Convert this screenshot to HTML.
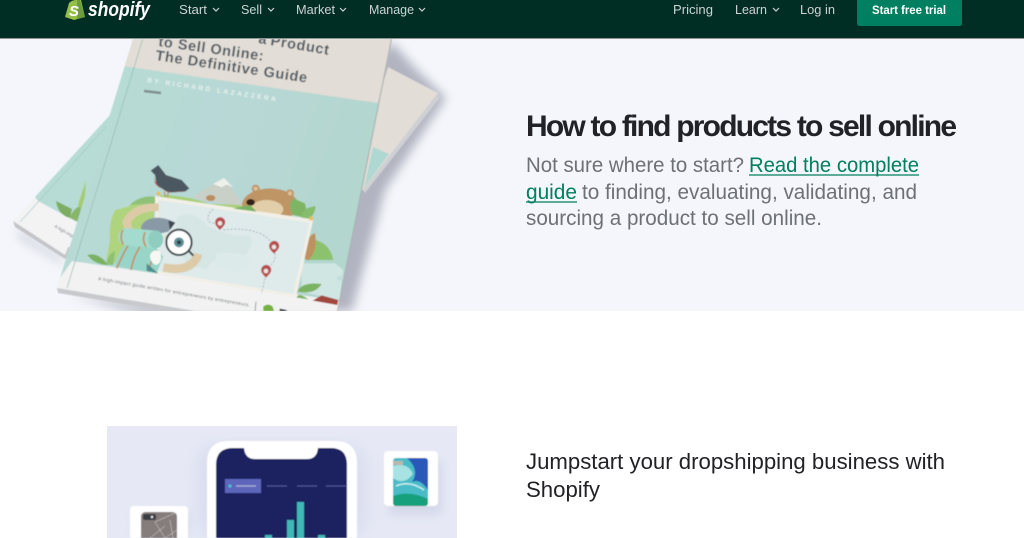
<!DOCTYPE html>
<html>
<head>
<meta charset="utf-8">
<title>Shopify</title>
<style>
html,body{margin:0;padding:0;background:#fff;width:1024px;height:538px;overflow:hidden}
svg{display:block}
text{font-family:"Liberation Sans",sans-serif}
</style>
</head>
<body>
<svg width="1024" height="538" viewBox="0 0 1024 538" xmlns="http://www.w3.org/2000/svg">
<defs>
<filter id="b8" x="-30%" y="-30%" width="160%" height="160%"><feGaussianBlur stdDeviation="8"/></filter>
<filter id="b5" x="-30%" y="-30%" width="160%" height="160%"><feGaussianBlur stdDeviation="5"/></filter>
<filter id="s" x="-5%" y="-5%" width="110%" height="110%"><feGaussianBlur stdDeviation="0.5"/></filter>
<filter id="t" x="-5%" y="-20%" width="110%" height="140%"><feGaussianBlur stdDeviation="0.3"/></filter>
<clipPath id="hero"><rect x="0" y="39" width="1024" height="272"/></clipPath>
<clipPath id="cover"><path d="M133 39H392L338 311H195L57 288Z"/></clipPath>
<clipPath id="low"><rect x="0" y="426" width="1024" height="112"/></clipPath>
<clipPath id="case"><rect x="393" y="458" width="35" height="48" rx="3"/></clipPath>
<linearGradient id="teal" x1="0" y1="0" x2="1" y2="0.3"><stop offset="0" stop-color="#b6dcd5"/><stop offset=".6" stop-color="#b8d8d6"/><stop offset="1" stop-color="#b3d6ce"/></linearGradient>
</defs>

<!-- hero -->
<rect x="0" y="39" width="1024" height="272" fill="#f4f6fb"/>
<g clip-path="url(#hero)">
  <!-- shadows -->
  <path d="M392 42L415 68L446 98L385 190L352 311H325L375 60Z" fill="#85879a" opacity=".6" filter="url(#b5)"/>
  <path d="M70 295L190 311L340 311L200 330Z" fill="#85879a" opacity=".55" filter="url(#b5)"/>
  <path d="M16 228L64 258L62 264L20 240Z" fill="#9a9db0" opacity=".35" filter="url(#b5)"/>

  <g filter="url(#s)">
    <!-- back left book -->
    <path d="M13 221L15 227L65 259L75 250Z" fill="#c3c5c8"/>
    <path d="M110 115L13 221L65 255L110 140Z" fill="#f3f3f4"/>
    <path d="M110 115L35 197L38 201L77 222L110 140Z" fill="#b6dcd5"/>
    <path d="M114 118L20 222" stroke="#a4c9c3" stroke-width=".6" fill="none"/>
    <path d="M56 201L72 209L70 218Q58 215 56 201Z" fill="#7dad62"/>
    <path d="M70 218Q72 209 82 205L78 222Z" fill="#88b76c"/>
    <path d="M78 205L86 180L84 212Z" fill="#a6cc72"/>
    <g transform="translate(54 227) rotate(30)"><text x="0" y="0" font-size="4.5" fill="#77797d">A high-imp</text></g>

    <!-- back right book -->
    <path d="M438 93L439 99L365 193L363 190Z" fill="#cfd0d4"/>
    <path d="M388 67L438 93L363 190L350 190Z" fill="#e2ddd6"/>
    <path d="M373 147L389 154L364 188Z" fill="#b0d8d2"/>

    <!-- front book -->
    <path d="M57 288L58 293L195 316L205 300Z" fill="#c7c9cc"/>
    <path d="M133 39H392L338 311H195L57 288Z" fill="url(#teal)"/>
    <g clip-path="url(#cover)">
      <path d="M120 30H400L378 103L123 66Z" fill="#e2ddd6"/>
      <path d="M72 261L341 301L338 320H180L50 292Z" fill="#f2f2f2"/>
      <path d="M392 39L338 311" stroke="#a9adad" stroke-width="2" fill="none"/>
      <path d="M143 38L67 288" stroke="#93bcb5" stroke-width=".7" fill="none"/>

      <!-- cover text -->
      <text transform="translate(158 46) rotate(8)" font-size="14.5" font-weight="700" fill="#515c63" textLength="106" lengthAdjust="spacing">to Sell Online:</text>
      <text transform="translate(258 43) rotate(9)" font-size="14.5" font-weight="700" fill="#515c63" textLength="8">a</text>
      <text transform="translate(270 45) rotate(9.5)" font-size="14.5" font-weight="700" fill="#515c63" textLength="59" lengthAdjust="spacing">Product</text>
      <text transform="translate(155 60) rotate(8.5)" font-size="14.5" font-weight="700" fill="#515c63" textLength="153" lengthAdjust="spacing">The Definitive Guide</text>
      <text transform="translate(147 82) rotate(8.5)" font-size="6.5" font-weight="700" fill="#e8f1ee" textLength="130" lengthAdjust="spacing">BY RICHARD LAZAZZERA</text>
      <path d="M144 91L161 93" stroke="#808d90" stroke-width="2.5"/>
      <text transform="translate(98 280) rotate(10)" font-size="4.8" fill="#666b70" textLength="154" lengthAdjust="spacing">A high-impact guide written for entrepreneurs by entrepreneurs.</text>
    </g>

    <!-- illustration: coordinates are zoom space -->
    <g transform="translate(0 150) scale(.3333)">
      <!-- mountain -->
      <path d="M578 140L672 84L735 170L600 150Z" fill="#c9d0c8"/>
      <path d="M640 102L672 84L700 112L680 104L665 112Z" fill="#eef0ea"/>
      <ellipse cx="632" cy="144" rx="14" ry="9" fill="#b98d5e"/>
      <!-- far bushes -->
      <path d="M1000 330Q990 280 945 270L915 330Z" fill="#8cc26e"/>
      <path d="M905 340H1005L1030 360L1018 450L905 425Z" fill="#d0e6e3"/>
      <!-- bear -->
      <path d="M905 320Q925 250 945 250Q955 300 925 332Z" fill="#be9160"/>
      <ellipse cx="810" cy="165" rx="84" ry="50" fill="#bf9566"/>
      <circle cx="767" cy="116" r="12" fill="#bf9566"/><circle cx="767" cy="116" r="6" fill="#dcc29c"/>
      <circle cx="870" cy="130" r="12" fill="#bf9566"/><circle cx="870" cy="130" r="6" fill="#dcc29c"/>
      <ellipse cx="800" cy="178" rx="50" ry="28" fill="#e2cfa9"/>
      <ellipse cx="752" cy="157" rx="13" ry="10" fill="#352016"/>
      <path d="M880 145Q860 165 880 195L925 205L915 160Z" fill="#7eb565"/>
      <path d="M905 205Q900 175 947 168Q945 195 925 208Z" fill="#86bc6d"/>
      <!-- left bush -->
      <path d="M465 140L400 155L385 170L345 180Q325 220 330 270L318 335L450 350Z" fill="#b0d37e"/>
      <path d="M390 165Q420 135 465 140L465 160Z" fill="#8fc278"/>
      <path d="M480 135Q560 135 640 165L760 185L720 165L480 155Z" fill="#a9cf76"/>
      <!-- map -->
      <path d="M465 138L940 208L888 442L468 372Z" fill="#f2efe7"/>
      <path d="M476 150L928 218L880 432L476 364Z" fill="#dfeaeb"/>
      <path d="M530 205Q570 170 625 230Q700 265 750 255Q770 300 710 330Q640 310 620 360L560 340L520 280Z" fill="#d5e6e5"/>
      <path d="M650 310Q720 300 760 330L740 360Q670 370 645 340Z" fill="#dcebea"/>
      <path d="M700 176L770 185L750 165Z" fill="#78b160"/>
      <path d="M640 178Q620 190 625 215L648 222M670 240Q730 232 780 250Q805 262 815 280M825 310Q830 330 808 350M795 385L785 430" fill="none" stroke="#8a9a9c" stroke-width="2" stroke-dasharray="6 5"/>
      <!-- pins -->
      <path d="M660 240Q645 225 646 220A15 15 0 1 1 675 221Q674 226 660 240Z" fill="#b84e50"/><circle cx="660" cy="220" r="7" fill="#e8e6e0"/>
      <path d="M822 311Q807 296 808 291A15 15 0 1 1 837 292Q836 297 822 311Z" fill="#b84e50"/><circle cx="822" cy="291" r="7" fill="#e8e6e0"/>
      <path d="M798 383Q783 368 784 363A15 15 0 1 1 813 364Q812 369 798 383Z" fill="#b84e50"/><circle cx="798" cy="363" r="7" fill="#e8e6e0"/>
      <path d="M470 125h11v11h-11zM928 200h11v11h-11z" fill="#e9bd5f"/>
      <!-- bird -->
      <path d="M452 62L475 45L498 75L545 90L568 115L555 125L505 128L470 105L465 75Z" fill="#4b5962"/>
      <path d="M462 80Q470 115 505 127L565 122L545 125Q490 132 465 100Z" fill="#b55a4b"/>
      <path d="M492 125L497 140M505 125L503 140" stroke="#b87d58" stroke-width="3"/>
      <!-- arms and pack -->
      <path d="M476 172Q405 170 380 215L385 240" fill="none" stroke="#ddcba8" stroke-width="24"/>
      <path d="M595 312Q575 370 490 352" fill="none" stroke="#ddcba8" stroke-width="26"/>
      <path d="M423 232Q430 205 475 203Q505 205 526 218L505 245Q460 258 425 240Z" fill="#8a99a6"/>
      <path d="M505 212L526 218L510 240Z" fill="#3f4a50"/>
      <path d="M345 348Q350 310 375 285L470 295L490 320L470 370Z" fill="#98d5c9"/>
      <path d="M350 355Q370 310 385 285M393 360Q400 320 420 290M460 315L445 365" fill="none" stroke="#c78b62" stroke-width="5"/>
      <path d="M440 340L475 370L440 362Z" fill="#4f8c8c"/>
      <rect x="355" y="238" width="135" height="52" rx="25" fill="#a3dcce" transform="rotate(5 420 264)"/>
      <path d="M368 240Q358 265 370 284M435 247Q425 270 438 290" fill="none" stroke="#c78b62" stroke-width="5"/>
      <ellipse cx="467" cy="268" rx="22" ry="27" fill="#8ecdc0"/>
      <path d="M495 260Q520 235 528 255L500 290Z" fill="#ddcba8"/>
      <path d="M450 315Q460 295 480 305Q490 335 470 345Q450 340 450 315Z" fill="#f7f7f3"/>
      <!-- magnifier -->
      <path d="M562 298L580 317" stroke="#3c4448" stroke-width="6"/>
      <circle cx="537" cy="277" r="38" fill="#fff" stroke="#3c4448" stroke-width="6"/>
      <circle cx="537" cy="277" r="15" fill="#5e8e97"/><circle cx="537" cy="277" r="6" fill="#2d3c45"/>
      <!-- leaves -->
      <path d="M262 315Q295 305 325 345Q285 345 262 315Z" fill="#7ab262"/>
      <path d="M320 345Q320 315 345 303L340 345Z" fill="#8ec072"/>
      <path d="M892 425Q905 395 965 402Q945 435 892 425Z" fill="#7cb362"/>
      <path d="M890 443Q895 425 925 448Z" fill="#7cb362"/>
      <path d="M938 452L965 436L1015 450L1012 465Z" fill="#a2473e"/>
      <path d="M1010 385a10 7 0 1 1 20 0a10 7 0 1 1 -20 0" fill="#bfdedb"/>
      <!-- footer logo -->
      <path d="M768 455L765 488" stroke="#5f6468" stroke-width="2"/>
      <path d="M790 470Q805 458 818 470L822 483H790Z" fill="#75b13f"/>
      <path d="M838 483L840 476L860 480L861 483Z" fill="#33383c"/>
    </g>
  </g>
</g>

<!-- nav -->
<rect x="0" y="0" width="1024" height="38" fill="#002e25"/>
<rect x="0" y="38" width="1024" height="1" fill="#8f9694"/>
<path d="M65 17L69 3Q72 0 76 0H81L85 17L74 20Z" fill="#95bf47"/>
<path d="M80 0L85 17L77 19V0Z" fill="#6c9c3d"/>
<text x="69" y="16" font-size="15" font-weight="700" fill="#fff" font-style="italic">S</text>
<text x="88" y="16" font-size="20" font-weight="700" font-style="italic" fill="#fff" textLength="62" lengthAdjust="spacingAndGlyphs">shopify</text>
<g font-size="13" fill="#cdd3d1" font-weight="400">
  <text x="179" y="14" textLength="28" lengthAdjust="spacingAndGlyphs">Start</text>
  <text x="241" y="14" textLength="21" lengthAdjust="spacingAndGlyphs">Sell</text>
  <text x="296" y="14" textLength="39" lengthAdjust="spacingAndGlyphs">Market</text>
  <text x="369" y="14" textLength="45" lengthAdjust="spacingAndGlyphs">Manage</text>
  <text x="673" y="14" textLength="40" lengthAdjust="spacingAndGlyphs">Pricing</text>
  <text x="735" y="14" textLength="32" lengthAdjust="spacingAndGlyphs">Learn</text>
  <text x="800" y="14" textLength="35" lengthAdjust="spacingAndGlyphs">Log in</text>
</g>
<g fill="none" stroke="#cdd3d1" stroke-width="1.2">
  <path d="M213 8L216 11L219 8"/><path d="M268 8L271 11L274 8"/><path d="M340 8L343 11L346 8"/><path d="M419 8L422 11L425 8"/><path d="M773 8L776 11L779 8"/>
</g>
<path d="M857 0H962V23Q962 26 959 26H860Q857 26 857 23Z" fill="#008060"/>
<text x="872" y="14" font-size="12" font-weight="700" fill="#fff" textLength="74" lengthAdjust="spacingAndGlyphs">Start free trial</text>

<!-- hero text -->
<text x="526" y="136" font-size="30" font-weight="700" fill="#212326" textLength="431" lengthAdjust="spacing" filter="url(#t)">How to find products to sell online</text>
<g font-size="21" fill="#6d7175" filter="url(#t)">
  <text x="526" y="172" textLength="218" lengthAdjust="spacingAndGlyphs">Not sure where to start?</text>
  <text x="749" y="172" fill="#008060" textLength="170" lengthAdjust="spacingAndGlyphs">Read the complete</text>
  <text x="526" y="199" fill="#008060" textLength="51" lengthAdjust="spacingAndGlyphs">guide</text>
  <text x="582" y="199" textLength="335" lengthAdjust="spacingAndGlyphs">to finding, evaluating, validating, and</text>
  <text x="526" y="225" textLength="296" lengthAdjust="spacingAndGlyphs">sourcing a product to sell online.</text>
</g>
<path d="M749 175H919M526 202H577" stroke="#008060" stroke-width="1.2"/>

<!-- lower section -->
<g clip-path="url(#low)">
  <rect x="107" y="426" width="350" height="112" fill="#e6e9f5"/>
  <g filter="url(#s)">
    <rect x="197" y="445" width="170" height="93" rx="20" fill="#c8cce2" opacity=".4" filter="url(#b8)"/>
    <path d="M207 538V463Q207 441 229 441H335Q357 441 357 463V538Z" fill="#fff"/>
    <path d="M216 538V465Q216 448 233 448H244Q245 459 255 459H307Q317 459 318 448H331Q347 448 347 465V538Z" fill="#1c2260"/>
    <rect x="225" y="479" width="36" height="14" fill="#5d66bb"/>
    <circle cx="230" cy="486" r="1.6" fill="#43c3c8"/>
    <path d="M236 486H256" stroke="#aeb3da" stroke-width="1.2"/>
    <path d="M267 486H287M297 486H317M326 486H346" stroke="#4e5490" stroke-width="1.2"/>
    <rect x="297" y="502" width="7" height="36" fill="#3fb8b5"/>
    <rect x="287" y="520" width="7" height="18" fill="#3fb8b5"/>
    <rect x="265" y="535" width="7" height="3" fill="#3fb8b5"/>
    <rect x="318" y="535" width="7" height="3" fill="#3fb8b5"/>

    <rect x="388" y="460" width="54" height="55" rx="4" fill="#c8cce2" opacity=".6" filter="url(#b5)"/>
    <rect x="384" y="451" width="54" height="55" rx="4" fill="#fff"/>
    <g clip-path="url(#case)">
      <rect x="393" y="458" width="35" height="48" fill="#49bcc8"/>
      <path d="M407 458H428V490Q420 478 412 482Q420 470 407 458Z" fill="#2c58b8"/>
      <path d="M393 466Q408 462 413 474Q404 486 393 478Z" fill="#a8e2e2"/>
      <path d="M396 486Q410 480 424 490" stroke="#c9eef0" stroke-width="1.5" fill="none"/>
      <path d="M393 496Q410 490 428 499V506H393Z" fill="#17a07c"/>
      <path d="M393 461H403V465H393Z" fill="#b9b8ad"/>
    </g>

    <rect x="134" y="512" width="54" height="26" rx="4" fill="#c8cce2" opacity=".6" filter="url(#b5)"/>
    <path d="M130 538V510Q130 506 134 506H184Q188 506 188 510V538Z" fill="#fff"/>
    <path d="M141 538V517Q141 512 146 512H172Q177 512 177 517V538Z" fill="#857b7c"/>
    <rect x="143" y="514" width="13" height="6" rx="2" fill="#3b3e44"/>
    <circle cx="152" cy="517" r="1.2" fill="#eee"/>
    <path d="M155 522L175 513M155 522L165 538M165 538L177 530M150 538L165 526M170 520L173 538" stroke="#d7d2d2" stroke-width=".5" fill="none"/>
  </g>
</g>
<text x="526" y="469" font-size="22" fill="#212326" textLength="419" lengthAdjust="spacingAndGlyphs" filter="url(#t)">Jumpstart your dropshipping business with</text>
<text x="526" y="497" font-size="22" fill="#212326" textLength="74" lengthAdjust="spacingAndGlyphs" filter="url(#t)">Shopify</text>
</svg>
</body>
</html>
